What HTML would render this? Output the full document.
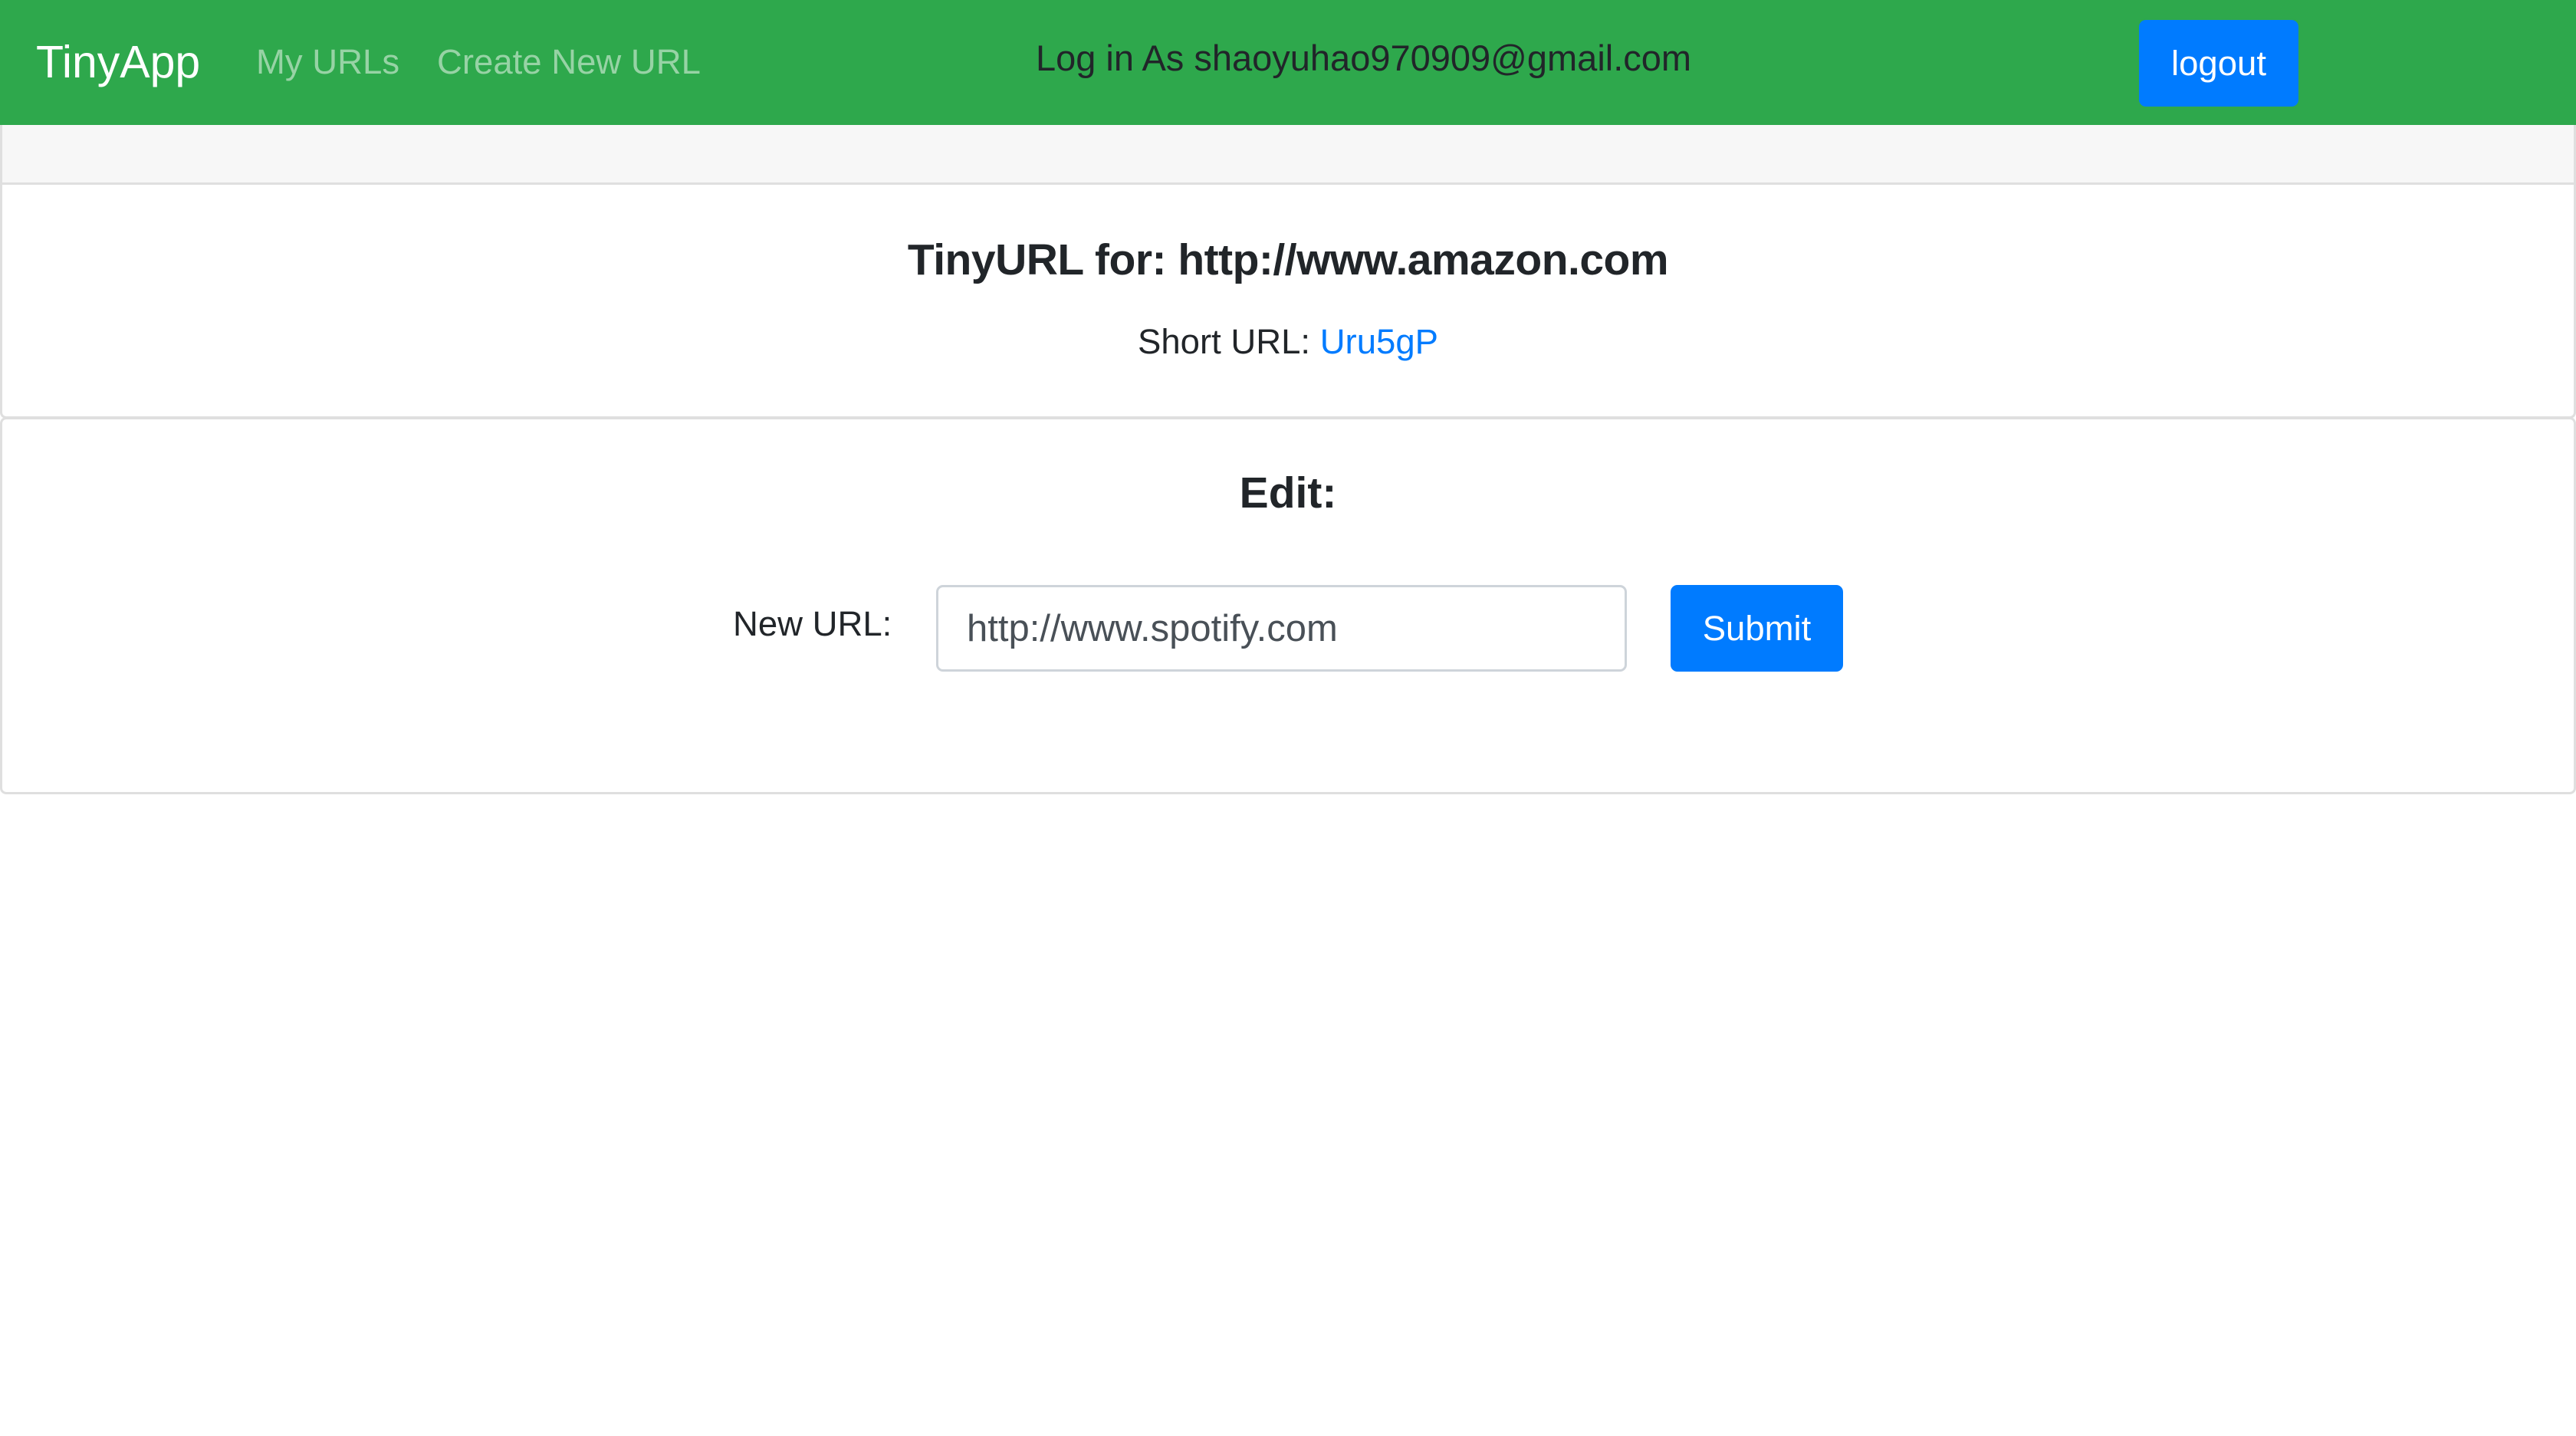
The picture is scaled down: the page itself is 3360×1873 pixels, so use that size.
<!DOCTYPE html>
<html><head><meta charset="utf-8"><style>
*{margin:0;padding:0;box-sizing:border-box}
body{width:3360px;height:1873px;background:#fff;font-family:"Liberation Sans",sans-serif;color:#212529;position:relative;overflow:hidden}
.a{position:absolute;white-space:nowrap;display:flex;align-items:center}
.nav{position:absolute;left:0;top:0;width:3360px;height:163px;background:#2ea84c}
</style></head><body>
<div class="nav"></div>
<div class="a" style="left:47px;top:41px;height:80px;font-size:59px;color:#fff">TinyApp</div>
<div class="a" style="left:334px;top:41px;height:80px;font-size:45.5px;color:#97d3a5">My URLs</div>
<div class="a" style="left:1300px;width:957px;justify-content:center;top:35px;height:80px;font-size:47px;color:#212529">Log in As shaoyuhao970909@gmail.com</div>
<div class="a" style="left:570px;top:41px;height:80px;font-size:45.5px;color:#97d3a5">Create New URL</div>
<div class="a" style="left:2790px;top:26px;width:208px;height:113px;background:#007bff;border-radius:9px;justify-content:center;color:#fff;font-size:45.5px">logout</div>

<div style="position:absolute;left:0;top:163px;width:3360px;height:78px;background:#f7f7f7;border:3px solid #dfdfdf;border-top:none"></div>
<div style="position:absolute;left:0;top:238px;width:3360px;height:308px;border:3px solid #dfdfdf;border-top:none;border-radius:0 0 8px 8px"></div>
<div class="a" style="left:0;width:3360px;justify-content:center;top:299px;height:80px;font-size:57px;font-weight:bold;letter-spacing:-0.5px">TinyURL for: http://www.amazon.com</div>
<div class="a" style="left:0;width:3360px;justify-content:center;top:406px;height:80px;font-size:45.5px">Short URL:&nbsp;<span style="color:#007bff">Uru5gP</span></div>

<div style="position:absolute;left:0;top:544px;width:3360px;height:492px;border:3px solid #dfdfdf;border-radius:8px"></div>
<div class="a" style="left:0;width:3360px;justify-content:center;top:603px;height:80px;font-size:57px;font-weight:bold">Edit:</div>
<div class="a" style="left:956px;top:774px;height:80px;font-size:45.5px">New URL:</div>
<div class="a" style="left:1221px;top:763px;width:901px;height:113px;border:3px solid #ced4da;border-radius:9px;padding-left:37px;font-size:49px;color:#495057">http://www.spotify.com</div>
<div class="a" style="left:2179px;top:763px;width:225px;height:113px;background:#007bff;border-radius:9px;justify-content:center;color:#fff;font-size:45.5px">Submit</div>
</body></html>
